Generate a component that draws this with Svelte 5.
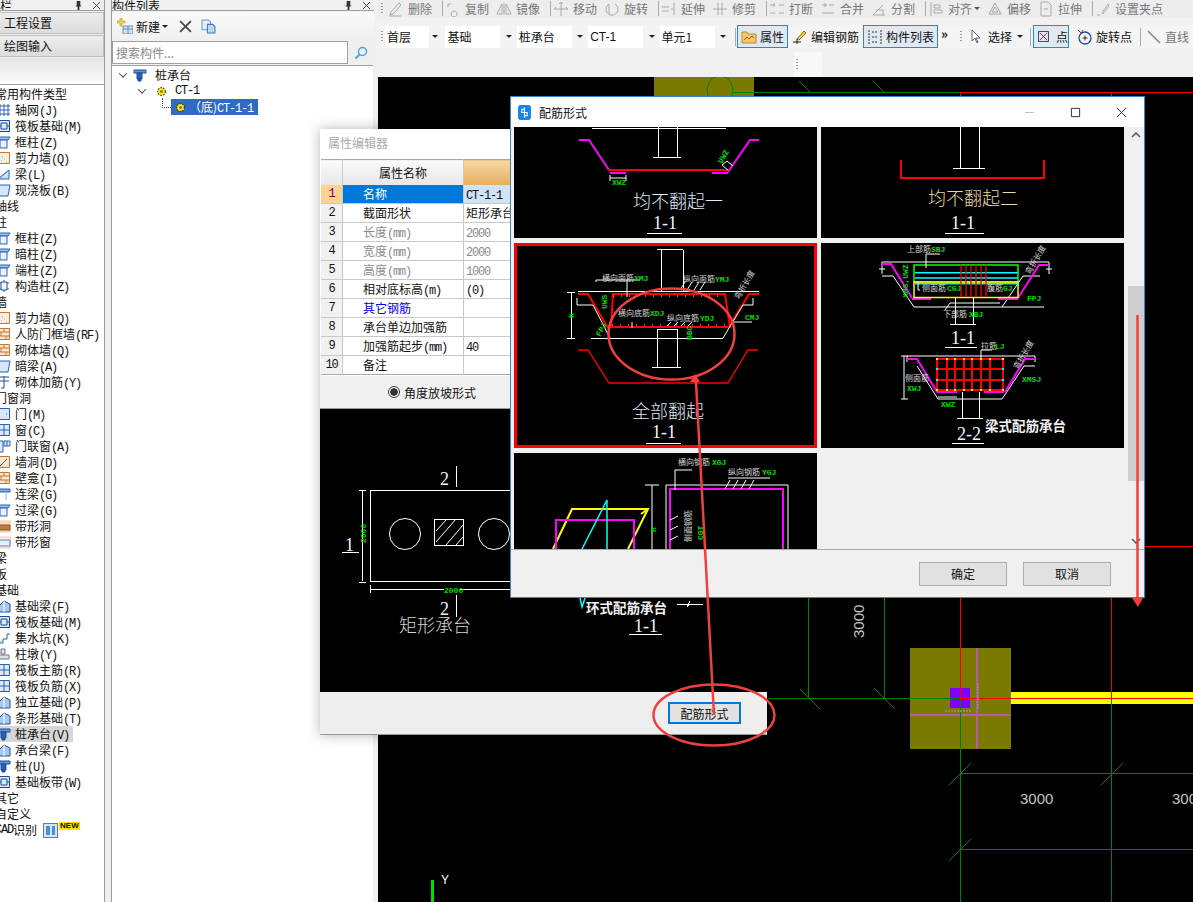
<script>
	// sidebar rows: text, shortcut key, icon kind. No icon = category heading
	const sideRows = [
		['常用构件类型'], ['轴网', 'J', 'grid'], ['筏板基础', 'M', 'raft'], ['框柱', 'Z', 'col'], ['剪力墙', 'Q', 'wall'], ['梁', 'L', 'beam'], ['现浇板', 'B', 'slab'],
		['轴线'], ['柱'], ['框柱', 'Z', 'col'], ['暗柱', 'Z', 'col'], ['端柱', 'Z', 'col'], ['构造柱', 'Z', 'gear'],
		['墙'], ['剪力墙', 'Q', 'wall'], ['人防门框墙', 'RF', 'brick'], ['砌体墙', 'Q', 'brick'], ['暗梁', 'A', 'slab'], ['砌体加筋', 'Y', 'rebar'],
		['门窗洞'], ['门', 'M', 'door'], ['窗', 'C', 'win'], ['门联窗', 'A', 'doorwin'], ['墙洞', 'D', 'hole'], ['壁龛', 'I', 'brick'], ['连梁', 'G', 'lintel'], ['过梁', 'G', 'col'], ['带形洞', '', 'band'], ['带形窗', '', 'bandwin'],
		['梁'], ['板'], ['基础'],
		['基础梁', 'F', 'found'], ['筏板基础', 'M', 'raft'], ['集水坑', 'K', 'pit'], ['柱墩', 'Y', 'pier'], ['筏板主筋', 'R', 'win'], ['筏板负筋', 'X', 'win'], ['独立基础', 'P', 'found'], ['条形基础', 'T', 'found'], ['桩承台', 'V', 'cap'], ['承台梁', 'F', 'found'], ['桩', 'U', 'cap'], ['基础板带', 'W', 'raft'],
		['其它'], ['自定义']
	];

	// each icon is a list of [path, stroke, fill]
	const icons = {
		grid: [['M1 3h12M1 7h12M1 11h12M3 1v12M7 1v12M11 1v12', '#2a62b0', 'none']],
		raft: [['M1.500 1.500h11v11h-11z', '#1f4f9c', '#dbe7f6'], ['M4 4h6v6h-6zM1 7h3M10 7h3', '#1f4f9c', 'none']],
		col: [['M1 2h12l-2 3h-10z', '#2a62b0', '#9cc0ea'], ['M3 5h7v8h-7z', '#2a62b0', '#e9f1fb']],
		wall: [['M1.500 1.500h11v11h-11z', '#c9772f', '#f4efe6'], ['M4 10h.500M7 8h.500M9 11h.500M5 6h.500', '#777', 'none']],
		beam: [['M1 12l11-9v9z', '#2a62b0', '#cfe0f5'], ['M3 11l8-7', '#4f8fd8', 'none']],
		slab: [['M1 2h12l-2 11h-9z', '#2a62b0', '#d6e5f7']],
		gear: [['M7 1v12M2 4h10M2 10h10', '#2a62b0', 'none'], ['M4 3h6v8h-6z', '#1f4f9c', '#f3f6fb']],
		brick: [['M1.500 1.500h11v11h-11z', '#c9772f', '#f7e6d3'], ['M1 5h12M1 9h12M7 1v4M4 5v4M9 9v4', '#c9772f', 'none']],
		rebar: [['M1 2h11M1 6h11M7 1v12M4 13h3', '#1f4f9c', 'none']],
		door: [['M1.500 1.500h11v11h-11z', '#2a62b0', '#dbe7f6'], ['M9 7h1', '#1f4f9c', 'none']],
		win: [['M1.500 1.500h11v11h-11z', '#2a62b0', '#dbe7f6'], ['M7 1v12M1 7h12', '#2a62b0', 'none']],
		doorwin: [['M1 2h5v11h-5zM7 2h6v5h-6z', '#2a62b0', '#dbe7f6'], ['M10 2v5', '#2a62b0', 'none']],
		hole: [['M1.500 1.500h11v11h-11z', '#c9772f', '#f7e6d3'], ['M3 11l7-7', '#555', 'none']],
		lintel: [['M1 2h12v3h-12z', '#2a62b0', '#7ea9de'], ['M9 5v8', '#8db4e2', 'none']],
		band: [['M0 2h14v11h-14z', '#f2c9a8', '#f7dcc4'], ['M0 6h13v5h-13z', '#8a5a2c', '#b77c45']],
		bandwin: [['M0 2h14v11h-14z', '#f2c9a8', '#f9ece2'], ['M0 5h13v6h-13z', '#5c86c4', '#e4edf9']],
		found: [['M1 13v-5l6-6 6 3v8z', '#1f4f9c', '#a9c7ec'], ['M7 2v11', '#fff', 'none']],
		pit: [['M1 12h5v-4h4v-5h3', '#2a62b0', 'none'], ['M2 12l4-3', '#8db4e2', 'none']],
		pier: [['M4 2h4v5h-4zM1 8h11v4h-11z', '#777', '#d9e3ef']],
		cap: [['M1 2h12v3h-12z', '#1f4f9c', '#5f93d6'], ['M4 5h5v6h-5zM5 11h3v2h-3z', '#1f4f9c', '#2a62b0']]
	};

	// 0 is a separator
	const tools = [
		['删除', 'M2 14l3-1 8-9-2-2-8 9zM1 15h12'], 0,
		['复制', 'M3 3h3M3 3v3M9 10a3 3 0 1 0 .100 0'], ['镜像', 'M8 2v12M6 13h-5l5-10zM10 13h5l-5-10z'], 0,
		['移动', 'M8 1v14M1 8h14M8 1l-2 2M8 1l2 2M1 8l2-2M15 8l-2-2'], ['旋转', 'M5 3a6 6 0 1 0 6 0M5 3v10'], 0,
		['延伸', 'M1 6h7M1 10h7M13 2v12M10 8h2'], ['修剪', 'M1 8h14M6 2v12M10 2v12'], 0,
		['打断', 'M1 4h5M10 4h5M1 12h5M10 12h5M5 2v4'], ['合并', 'M2 4h5M9 4h5M2 12h12M5 2v4'], ['分割', 'M2 14h12M2 14l10-10M5 9h7v5'], 0,
		['对齐', 'M3 1v14M6 4h6v3h-6zM6 9h8v3h-8z', true], ['偏移', 'M8 2l6 11h-12zM8 6l3 5h-6z'], ['拉伸', 'M3 1h7l3 3v11h-10zM6 8h4'], 0,
		['设置夹点', 'M2 14h3M7 12l6-9 1 2-6 8z']
	];

	const props = [
		['名称', '', 'CT-1-1'],
		['截面形状', '', '矩形承台'],
		['长度', '(mm)', '2000', true],
		['宽度', '(mm)', '2000', true],
		['高度', '(mm)', '1000', true],
		['相对底标高', '(m)', '(0)'],
		['其它钢筋', '', ''],
		['承台单边加强筋', '', ''],
		['加强筋起步', '(mm)', '40'],
		['备注', '', '']
	];

	// corner bars of the beam type section, drawn as dots on the red grid
	const gridX = [937, 947, 955, 964, 972, 981, 990, 1003];
</script>

{#snippet icon(kind)}
	<svg class="ico" viewBox="0 0 14 14">
		{#each icons[kind] as p}
			<path d={p[0]} stroke={p[1]} fill={p[2]} />
		{/each}
	</svg>
{/snippet}

{#snippet panelHead(title)}
	<div class="panel-head">
		<span class="panel-title">{title}</span>
		<svg class="pin" viewBox="0 0 10 10"><path d="M3 0h4v5h1v1h-2v4h-2v-4h-2v-1h1z" fill="#333" /></svg>
		<svg class="x" viewBox="0 0 10 10"><path d="M1 1l8 8M9 1l-8 8" stroke="#333" fill="none" /></svg>
	</div>
{/snippet}

{#snippet caret()}
	<i class="caret"></i>
{/snippet}

<div class="app">
	<aside class="side">
		{@render panelHead('栏')}
		<button class="side-btn">工程设置</button>
		<button class="side-btn">绘图输入</button>
		<div class="side-gap"></div>
		<div class="side-list">
			{#each sideRows as r}
				{#if r[2]}
					<div class="row item" class:on={r[0] === '桩承台'}>
						{@render icon(r[2])}<span>{r[0]}{#if r[1]}<span class="lat">({r[1]})</span>{/if}</span>
					</div>
				{:else}
					<div class="row cat">{r[0]}</div>
				{/if}
			{/each}
			<div class="row cat">
				<span class="lat">CAD</span>识别
				<span class="cad-ico"><i></i><i></i></span>
				<span class="new">NEW</span>
			</div>
		</div>
	</aside>

	<section class="list-panel">
		{@render panelHead('构件列表')}
		<div class="list-tools">
			<svg class="new-ico" viewBox="0 0 16 16">
				<path d="M3 0h2v3h3v2h-3v3h-2v-3h-3v-2h3z" fill="#f2d24a" stroke="#a88a1c" stroke-width=".5" />
				<path d="M6 8h10v8h-10z" fill="#cfe0f5" stroke="#6d8fb8" />
				<path d="M6 11h10M11 8v8" stroke="#6d8fb8" />
			</svg>
			<span>新建</span>{@render caret()}
			<svg class="del-ico" viewBox="0 0 12 12"><path d="M1 1l10 10M11 1l-10 10" stroke="#444" stroke-width="1.600" fill="none" /></svg>
			<svg class="copy-ico" viewBox="0 0 14 14"><path d="M1 1h6l2 2v7h-8z" fill="#e6eef8" stroke="#6d9ad0" /><path d="M6 5h5l2 2v6h-7z" fill="#bcd5f0" stroke="#3f7bbf" /></svg>
		</div>
		<div class="search">
			<div class="search-input">搜索构件...</div>
			<div class="search-btn">
				<svg viewBox="0 0 14 14"><circle cx="8.500" cy="5.500" r="4" fill="#e8f4fd" stroke="#4aa3e0" stroke-width="1.500" /><path d="M5.500 8.500l-4 4" stroke="#4aa3e0" stroke-width="2" /></svg>
			</div>
		</div>
		<div class="tree">
			<div class="node n0">
				<i class="chev"></i>
				<span class="cap-ico">{@render icon('cap')}</span>
				<span>桩承台</span>
			</div>
			<div class="node n1">
				<i class="chev"></i>
				<svg class="gear" viewBox="0 0 10 10"><circle cx="5" cy="5" r="3.500" fill="#ffe800" stroke="#444" stroke-dasharray="1.500 1" /><circle cx="5" cy="5" r="1.200" fill="#666" /></svg>
				<span class="lat">CT-1</span>
			</div>
			<div class="node n2">
				<i class="elbow"></i>
				<div class="picked">
					<svg class="gear" viewBox="0 0 10 10"><circle cx="5" cy="5" r="3.500" fill="#ffe800" stroke="#333" stroke-dasharray="1.500 1" /><circle cx="5" cy="5" r="1.200" fill="#666" /></svg>
					<span class="picked-t">（底)<span class="lat">CT-1-1</span></span>
				</div>
			</div>
		</div>
	</section>

	<main class="main">
		<div class="toolbar">
			<div class="tools-1">
				<i class="grip"></i>
				{#each tools as t}
					{#if t === 0}
						<i class="tsep"></i>
					{:else}
						<div class="tool" class:drop={t[2]}>
							<svg viewBox="0 0 16 16"><path d={t[1]} /></svg>
							<span>{t[0]}</span>{#if t[2]}{@render caret()}{/if}
						</div>
					{/if}
				{/each}
			</div>
			<div class="tools-2">
				<i class="grip"></i>
				<div class="combo c1"><span>首层</span>{@render caret()}</div>
				<div class="combo"><span>基础</span>{@render caret()}</div>
				<div class="combo"><span>桩承台</span>{@render caret()}</div>
				<div class="combo"><span class="lat">CT-1</span>{@render caret()}</div>
				<div class="combo"><span>单元1</span>{@render caret()}</div>
				<i class="vsep"></i>
				<div class="tbtn active">
					<svg viewBox="0 0 16 16"><path d="M1 3h5l1 2h8v9h-14z" fill="#f3c76b" stroke="#b98a2e" /><path d="M3 11l3-3 2 2 3-3 2 2" stroke="#a3571e" fill="none" /></svg>
					<span>属性</span>
				</div>
				<div class="tbtn">
					<svg viewBox="0 0 16 16"><path d="M5 10l7-8 2 2-7 7z" fill="#f2d24a" stroke="#8a6a10" /><path d="M1 13h8M5 10v5" stroke="#222" fill="none" /></svg>
					<span>编辑钢筋</span>
				</div>
				<div class="tbtn active">
					<svg viewBox="0 0 16 16"><path d="M2 1v14M14 1v14M5 3h6M5 8h6M5 13h6" stroke="#333" stroke-dasharray="2 1" fill="none" /></svg>
					<span>构件列表</span>
				</div>
				<span class="more">»</span>
				<i class="grip"></i>
				<div class="tbtn pick">
					<svg viewBox="0 0 16 16"><path d="M5 1v11l3-3 2 5 1-1-2-4h4z" fill="#fff" stroke="#667" /></svg>
					<span>选择</span>{@render caret()}
				</div>
				<i class="vsep v2"></i>
				<div class="tbtn active dot">
					<svg viewBox="0 0 12 12"><path d="M.500.500h11v11h-11z" fill="#dce8f7" stroke="#333" /><path d="M2 2l8 8M10 2l-8 8" stroke="#a11" fill="none" /></svg>
					<span>点</span>
				</div>
				<div class="tbtn spin">
					<svg viewBox="0 0 16 16"><circle cx="8" cy="9" r="6" fill="none" stroke="#1f4f9c" stroke-width="1.300" /><path d="M8 6.500v5M5.500 9h5" stroke="#333" /><path d="M1 1l3 3 2-3" stroke="#c22" fill="none" /></svg>
					<span>旋转点</span>
				</div>
				<i class="vsep"></i>
				<div class="tbtn off">
					<svg viewBox="0 0 16 16"><path d="M2 2l12 12" stroke="#888" stroke-width="1.500" /></svg>
					<span>直线</span>
				</div>
			</div>
			<div class="tools-3"><div class="float-tab"><i class="grip"></i></div></div>
		</div>

		<svg class="canvas" viewBox="378 77 815 825" shape-rendering="crispEdges">
			<rect x="654" y="77" width="100" height="20" fill="#7a7a00" />
			<path class="cg" d="M732 92H960M799 81l12 12M873 81l12 12" />
			<ellipse class="cg" cx="720" cy="90" rx="13" ry="14" shape-rendering="auto" />
			<path class="cr" d="M960 92H1193M960 92V698M1111 92V698" />
			<path class="cr" d="M1145 546H1193" />

			<path class="cg" d="M768 698H960M808 598V698M884 598V698M800 689l20 20M874 688l21 21" />
			<rect x="910" y="648" width="101" height="101" fill="#7a7a00" />
			<rect x="1011" y="692" width="182" height="12" fill="#ffff00" />
			<path class="cp" d="M977 648V749M910 715H1011" />
			<rect x="950" y="688" width="20" height="20" fill="#7f00ff" />
			<path class="cg" d="M910 698H960M960 698V902M1111 698V902M960 773H1193M960 849H1193" />
			<path class="cg" d="M949 785l22-22M1101 785l22-22M949 861l22-22" />
			<path class="cr" d="M960 598V698M1111 598V698M960 698H1193" />
			<path d="M945 711h26M978 683v26" stroke="#8a8a70" stroke-width="2" stroke-dasharray="2 1" fill="none" />

			<text class="dim" x="1020" y="804">3000</text>
			<text class="dim" x="1172" y="804">3000</text>
			<text class="dim" transform="translate(864 638) rotate(-90)">3000</text>

			<path d="M432 902V880" stroke="#00e000" stroke-width="3" fill="none" />
			<path d="M427 882l5-11 5 11z" fill="#00e000" />
			<text class="axis" x="441" y="884">Y</text>
		</svg>
	</main>

	<!-- property window, sits under the form dialog -->
	<div class="prop-win">
		<div class="prop-title">属性编辑器</div>
		<table class="prop-table">
			<thead>
				<tr><th class="num"></th><th class="pname">属性名称</th><th class="pval"></th></tr>
			</thead>
			<tbody>
				{#each props as p, i}
					<tr class:sel={i === 0} class:dim-row={p[3]}>
						<td class="num">{i + 1}</td>
						<td class="pname" class:link={i === 6}>{p[0]}<span class="lat">{p[1]}</span></td>
						<td class="pval">{#if /[\u4e00-\u9fa5]/.test(p[2])}{p[2]}{:else}<span class="lat">{p[2]}</span>{/if}</td>
					</tr>
				{/each}
			</tbody>
		</table>
		<div class="radio-row"><i class="radio"></i><span>角度放坡形式</span></div>
		<svg class="preview" viewBox="320 408 447 283">
			<g shape-rendering="crispEdges">
				<path class="w" d="M370.500 489.500H680V580.500H370.500ZM456.500 465V486M456.500 594V616M362.500 489V580M359 489h7M359 581h7M370 588.500H444M460 588.500H640M370 584v8" />
				<rect class="w" x="434" y="518" width="29" height="26" />
				<path class="w" d="M436 530l11-12M436 541l20-23M446 544l17-20M456 544l7-8" shape-rendering="auto" />
				<path class="w" d="M342 551H359M629 633H662" />
				<path class="w" d="M677 603H703M690 600l-3 6 3-3" />
			</g>
			<circle class="w" cx="405" cy="533" r="15.500" />
			<circle class="w" cx="494" cy="533" r="15.500" />
			<text class="num-t" x="440" y="484">2</text>
			<text class="num-t" x="440" y="614">2</text>
			<text class="num-t" x="345" y="550">1</text>
			<text class="grn tiny" transform="translate(366 542) rotate(-90)">2000</text>
			<text class="grn tiny" x="444" y="592">2000</text>
			<text class="cad-cap" x="399" y="631">矩形承台</text>
			<text class="bold-cap" x="586" y="612">环式配筋承台</text>
			<text class="num-t" x="634" y="631">1-1</text>
			<path class="c" d="M580 597l2 9 3-9" />
		</svg>
		<div class="prop-foot"><button class="form-btn">配筋形式</button></div>
	</div>

	<!-- rebar form dialog -->
	<div class="dialog">
		<div class="dlg-title">
			<svg class="dlg-logo" viewBox="0 0 12 14"><rect width="12" height="14" rx="2.500" fill="#1087e8" /><path d="M6 2v10M6 4H3.500v3H6M6 7h2.500v3H6" stroke="#fff" fill="none" /></svg>
			<span>配筋形式</span>
			<svg class="win-b min" viewBox="0 0 12 12"><path d="M1 6h10" stroke="#bbb" /></svg>
			<svg class="win-b max" viewBox="0 0 12 12"><path d="M1.500 1.500h9v9h-9z" stroke="#222" fill="none" /></svg>
			<svg class="win-b cls" viewBox="0 0 12 12"><path d="M1 1l10 10M11 1l-10 10" stroke="#222" fill="none" /></svg>
		</div>
		<div class="dlg-body">
			<div class="thumbs">
				<div class="thumb">
					<svg viewBox="514 127 303 111">
						<g shape-rendering="crispEdges">
							<path class="w" d="M592 128.500H726M658.500 127V157M677.500 127V157M653 157.500H681M647 233.500H682" />
						</g>
						<path class="m2" d="M579 140H589L609 170M728 172L750 140H759M610 173H626M712 173H728" />
						<path class="r2" d="M609 170H728" />
						<path class="w" d="M610 175v6M626 175v6M610 178H626M728 170l-6-5 5-4 6 5" />
						<text class="grn tiny" x="612" y="185">XWZ</text>
						<text class="grn tiny" transform="translate(722 164) rotate(-60)">UWZ</text>
						<text class="cap" x="633" y="208">均不翻起一</text>
						<text class="num-t" x="653" y="229">1-1</text>
					</svg>
				</div>
				<div class="thumb">
					<svg viewBox="821 127 303 111">
						<g shape-rendering="crispEdges">
							<path class="w" d="M960.500 127V168M979.500 127V168M953 168.500H985M945 233.500H984" />
							<path class="r2" d="M901 160V178H1044V160" />
						</g>
						<text class="cap warm" x="928" y="205">均不翻起二</text>
						<text class="num-t" x="951" y="229">1-1</text>
					</svg>
				</div>
				<div class="thumb picked-thumb">
					<svg viewBox="517 246 297 199">
						<g shape-rendering="crispEdges">
							<path class="w" d="M661.500 250V291M683.500 250V291M657 249.500H683M578 291.500H759M591 338.500H723M657.500 329V367M677.500 329V367M652 367.500H681M646 443.500H681M571.500 292V338M567 292h8M567 338h8M657 329.500H677" />
						</g>
						<path class="r2" d="M613 294H725L730 327H611Z" />
						<path class="r2" d="M578 294H588L608 328M730 325L749 294H759" />
						<path class="r1" d="M578 350H588L609 383H728L748 350H758" />
						<path class="w" d="M577 305H593L610 338M723 338L743 305H753M577 298V305M753 298V305M596 282V280H640M627 280V297M680 290l5-8M687 290l5-8M694 290l5-8M700 290l5-8M632 328V322M667 326l4-4M674 326l4-4M681 326l4-4M688 326l4-4M734 322H752" />
						<path class="dots" d="M613 296H725M612 325H730" />
						<text class="lab" x="602" y="281">横向面筋</text><text class="grn tiny" x="634" y="281">XMJ</text>
						<text class="lab" x="683" y="282">纵向面筋</text><text class="grn tiny" x="715" y="282">YMJ</text>
						<text class="lab" x="618" y="316">横向底筋</text><text class="grn tiny" x="650" y="316">XDJ</text>
						<text class="lab" x="667" y="321">纵向底筋</text><text class="grn tiny" x="700" y="321">YDJ</text>
						<text class="grn tiny" x="745" y="320">CMJ</text>
						<text class="grn tiny" transform="translate(600 337) rotate(-60)">FPJ</text>
						<text class="grn tiny" transform="translate(607 309) rotate(-90)">UWS</text>
						<text class="grn tiny" transform="translate(692 340) rotate(-90)">BBC</text>
						<text class="grn tiny" transform="translate(574 318) rotate(-90)">h</text>
						<text class="lab" transform="translate(739 300) rotate(-60)">弯折长度</text>
						<text class="cap" x="632" y="418">全部翻起</text>
						<text class="num-t" x="652" y="438">1-1</text>
					</svg>
				</div>
				<div class="thumb">
					<svg viewBox="821 243 303 205">
						<path class="w" d="M882 262H1049M882 262v12M1049 262v12M879 269h6M1046 269h6M882 276H893L914 307H1044M1002 307L1023 276H1040" />
						<path class="m2" d="M882 264H891L912 298M1018 298L1039 265H1048M912 299H931M998 299H1018" />
						<rect x="914" y="265" width="104" height="17" fill="none" stroke="#00ff00" stroke-width="1.500" />
						<rect x="914" y="282" width="104" height="15.500" fill="none" stroke="#ffff00" stroke-width="1.500" />
						<path class="c1" d="M915 272.700H1018M915 278H1018M915 283.700H1018" />
						<path class="r1" d="M961 265V297M966 265V297M971 265V297M976 265V297M981 265V297M986 265V297" />
						<path class="w" d="M955.500 298V324M973.500 298V324M950 324.500H976M945 347.500H977M926 254H940M926 254V268M920 290H918V282M1000 303H950L945 310" />
						<text class="lab" x="907" y="252">上部筋</text><text class="grn tiny" x="931" y="252">SBJ</text>
						<text class="lab" x="922" y="291">侧面筋</text><text class="grn tiny" x="947" y="291">CGJ</text>
						<text class="lab" x="987" y="291">腹筋</text><text class="grn tiny" x="1003" y="291">GJ</text>
						<text class="grn tiny" x="1027" y="301">FPJ</text>
						<text class="lab" x="943" y="317">下部筋</text><text class="grn tiny" x="969" y="317">XBJ</text>
						<text class="grn tiny" transform="translate(908 298) rotate(-90)">XMS,UWZ</text>
						<text class="lab" transform="translate(1030 275) rotate(-60)">弯折长度</text>
						<text class="num-t" x="951" y="344">1-1</text>

						<path class="w" d="M907 356H1035M907 356v6M1035 356v6M901 356H908M901 399H908M904 356V399M917 366L938 399H1002L1024 366H1035M962.500 392V418M979.500 392V418M957 418.500H983M952 443.500H984M981 350V381M981 350H992M938 397H957" />
						<path class="m2" d="M907 359H917L937 392M1005 392L1025 359H1035M937 392H957M984 392H1004" />
						<path class="r2" d="M937 359H1003V390H937ZM947 359V390M955 359V390M964 359V390M972 359V390M981 359V390M990 359V390M937 369H1003M937 380H1003" />
						{#each gridX as gx}
							<rect class="bar-y" x={gx - 1} y="358" width="2" height="2" />
							<rect class="bar-y" x={gx - 1} y="389" width="2" height="2" />
						{/each}
						<rect class="bar-c" x="936" y="368" width="2" height="2" />
						<rect class="bar-c" x="936" y="379" width="2" height="2" />
						<rect class="bar-c" x="1002" y="368" width="2" height="2" />
						<rect class="bar-c" x="1002" y="379" width="2" height="2" />
						<text class="lab" x="981" y="349">拉筋</text><text class="grn tiny" x="995" y="349">LJ</text>
						<text class="lab" x="905" y="381">侧面筋</text><text class="grn tiny" x="907" y="391">XWJ</text>
						<text class="grn tiny" x="1022" y="382">XMSJ</text>
						<text class="grn tiny" x="941" y="407">XWZ</text>
						<text class="lab" transform="translate(1018 370) rotate(-60)">弯折长度</text>
						<text class="num-t" x="957" y="440">2-2</text>
						<text class="bold-cap" x="985" y="431">梁式配筋承台</text>
					</svg>
				</div>
				<div class="thumb">
					<svg viewBox="514 453 303 96">
						<path class="y1" d="M553 549L572 509H648L628 549" />
						<path class="m2" d="M556 549V520H634V549M670 549V489H783V549" />
						<path class="c1" d="M582 549L607 500V549" />
						<path class="w" d="M666 549V485H788V549M652 485V549M645 485H659M675 490V470M675 470H692M725 489l5-9M733 489l5-9M741 489l5-9M749 489l5-9M728 478H770M670 520l8-4M670 530l8-4M670 540l8-4" />
						<path class="y1" d="M641 514L648 509" />
						<text class="lab" x="678" y="465">横向钢筋</text><text class="grn tiny" x="712" y="465">XGJ</text>
						<text class="lab" x="728" y="475">纵向钢筋</text><text class="grn tiny" x="762" y="475">YGJ</text>
						<text class="grn tiny" transform="translate(656 532) rotate(-90)">h</text>
						<text class="lab" transform="translate(691 542) rotate(-90)">侧面钢筋</text>
						<text class="grn tiny" transform="translate(703 540) rotate(-90)">CGT</text>
					</svg>
				</div>
			</div>
			<div class="scrollbar">
				<svg class="sb-arrow" viewBox="0 0 10 6"><path d="M1 5l4-4 4 4" stroke="#555" stroke-width="1.500" fill="none" /></svg>
				<div class="sb-track"><div class="sb-thumb"></div></div>
				<svg class="sb-arrow" viewBox="0 0 10 6"><path d="M1 1l4 4 4-4" stroke="#555" stroke-width="1.500" fill="none" /></svg>
			</div>
		</div>
		<div class="dlg-foot">
			<button class="dlg-btn">确定</button>
			<button class="dlg-btn">取消</button>
		</div>
	</div>

	<!-- hand drawn red marks from the screenshot author -->
	<svg class="marks" viewBox="0 0 1193 902">
		<ellipse cx="671.500" cy="334" rx="63" ry="45.500" />
		<ellipse cx="714" cy="715" rx="60.500" ry="30.500" />
		<path d="M714 715L696 382" />
		<path class="fill" d="M690 382l5-8 5 8z" />
		<path d="M1137.500 315V598" />
		<path class="fill" d="M1132 598h11l-5 9z" />
	</svg>
</div>

<style>
	:global(body) {
		background: #f0f0f0;
	}

	.app {
		position: relative;
		display: flex;
		width: 1193px;
		height: 902px;
		overflow: hidden;
		font-family: 'Noto Sans CJK SC', sans-serif;
		font-size: 12px;
		color: #111;
	}

	i {
		display: block;
		font-style: normal;
	}

	/* latin text of the old bitmap font is half the width of a han glyph */
	.lat {
		font-family: 'Liberation Mono', monospace;
		font-size: 12px;
		letter-spacing: -1.2px;
		line-height: 1;
	}

	.caret {
		width: 0;
		height: 0;
		border-left: 3px solid transparent;
		border-right: 3px solid transparent;
		border-top: 3px solid #222;
	}

	.panel-head {
		display: flex;
		align-items: center;
		height: 10px;
		margin-bottom: 1px;
		border-bottom: 1px solid #a0a0a0;
		overflow: hidden;
		line-height: 7px;
		flex: none;
	}

	.panel-title {
		flex: 1;
		white-space: nowrap;
	}

	.pin,
	.x {
		width: 9px;
		height: 9px;
		flex: none;
	}

	.pin {
		margin-right: 9px;
	}

	.x {
		margin-right: 3px;
	}

	/* left navigation */
	.side {
		width: 104px;
		flex: none;
		display: flex;
		flex-direction: column;
		border-right: 1px solid #9a9a9a;
		background: #f0f0f0;
	}

	.side-btn {
		height: 22px;
		flex: none;
		margin: 0 0 1px;
		padding: 0 0 0 4px;
		border: 1px solid #bdbdbd;
		border-left: 0;
		background: linear-gradient(#ededed, #dcdcdc);
		font: inherit;
		text-align: left;
		line-height: 20px;
		color: #111;
	}

	.side-gap {
		height: 26px;
		flex: none;
		background: linear-gradient(#e4e4e4, #fbfbfb);
	}

	.side-list {
		flex: 1;
		background: #fff;
		border-top: 1px solid #a0a0a0;
		padding-top: 1px;
	}

	.row {
		height: 16px;
		line-height: 16px;
		white-space: nowrap;
	}

	.cat {
		margin-left: -5px;
		display: flex;
		align-items: center;
	}

	.item {
		display: flex;
		align-items: center;
		gap: 4px;
		margin-left: -3px;
		width: 76px;
	}

	.item.on {
		background: #d6d6d6;
	}

	.ico {
		width: 14px;
		height: 14px;
		flex: none;
	}

	.cad-ico {
		display: flex;
		gap: 2px;
		margin-left: 6px;
		width: 15px;
		height: 15px;
		padding: 2px;
		box-sizing: border-box;
		background: #d7e6f7;
		border: 1px solid #6b7a8c;
	}

	.cad-ico i {
		flex: 1;
		background: #4a90d9;
	}

	.new {
		align-self: flex-start;
		height: 8px;
		margin-left: 1px;
		padding: 0 1px;
		background: #ffe100;
		font: bold 8px/8px 'Liberation Sans', sans-serif;
	}

	/* component list */
	.list-panel {
		width: 263px;
		margin-left: 6px;
		flex: none;
		display: flex;
		flex-direction: column;
		border-left: 1px solid #9a9a9a;
		box-sizing: border-box;
		background: #f0f0f0;
	}

	.list-tools {
		display: flex;
		align-items: center;
		height: 28px;
		flex: none;
		padding-left: 5px;
		background: linear-gradient(#fafafa, #efefef);
	}

	.new-ico {
		width: 16px;
		height: 16px;
		margin-right: 3px;
	}

	.list-tools .caret {
		margin-left: 2px;
	}

	.del-ico {
		width: 13px;
		height: 13px;
		margin-left: 11px;
	}

	.copy-ico {
		width: 15px;
		height: 15px;
		margin-left: 9px;
	}

	.search {
		display: flex;
		height: 25px;
		flex: none;
		box-sizing: border-box;
		padding: 1px 0;
	}

	.search-input {
		width: 236px;
		box-sizing: border-box;
		border: 1px solid #a0a0a0;
		background: #fff;
		color: #888;
		padding-left: 3px;
		line-height: 21px;
		font-size: 12px;
	}

	.search-btn {
		flex: 1;
		display: flex;
		align-items: center;
		justify-content: center;
		background: #efefef;
	}

	.search-btn svg {
		width: 14px;
		height: 14px;
	}

	.tree {
		flex: 1;
		margin-right: 1px;
		background: #fff;
		border-top: 1px solid #a0a0a0;
		padding-top: 1px;
	}

	.node {
		display: flex;
		align-items: center;
		height: 16px;
		line-height: 16px;
		white-space: nowrap;
	}

	.n0 {
		padding-left: 8px;
	}

	.n1 {
		padding-left: 27px;
	}

	.n2 {
		padding-left: 50px;
	}

	.chev {
		width: 5px;
		height: 5px;
		border-right: 1.500px solid #444;
		border-bottom: 1.500px solid #444;
		transform: rotate(45deg) translate(-1px, -1px);
	}

	.cap-ico {
		display: flex;
		margin: 0 8px 0 7px;
	}

	.n1 .chev {
		margin-right: 11px;
	}

	.gear {
		width: 11px;
		height: 11px;
		flex: none;
	}

	.n1 .lat {
		margin-left: 8px;
	}

	.elbow {
		width: 8px;
		height: 9px;
		margin-top: -8px;
		border-left: 1px dotted #555;
		border-bottom: 1px dotted #555;
	}

	.picked {
		display: flex;
		align-items: center;
		width: 87px;
		height: 16px;
		padding-left: 4px;
		box-sizing: border-box;
		background: #2f6bc4;
		color: #fff;
	}

	.picked-t {
		margin-left: 3px;
	}

	/* cad area */
	.main {
		flex: 1;
		min-width: 0;
		margin-left: 4px;
		display: flex;
		flex-direction: column;
	}

	.toolbar {
		height: 77px;
		flex: none;
		background: #f1f1f1;
	}

	.grip {
		width: 2px;
		height: 12px;
		flex: none;
		background-image: linear-gradient(#999 50%, transparent 50%);
		background-size: 2px 3px;
	}

	.tools-1 {
		display: flex;
		align-items: center;
		height: 17px;
		padding-left: 3px;
		background: #ededed;
		color: #777;
		overflow: hidden;
	}

	.tools-1 > .grip {
		margin-right: 5px;
	}

	.tool {
		display: flex;
		align-items: center;
		gap: 4px;
		width: 51px;
		flex: none;
	}

	.tool span {
		white-space: nowrap;
	}

	.tool.drop {
		width: 59px;
	}

	.tool .caret {
		border-top-color: #555;
		margin-left: -2px;
	}

	.tool svg {
		width: 16px;
		height: 16px;
		flex: none;
		fill: none;
		stroke: #a9a9a9;
	}

	.tsep {
		width: 6px;
		height: 15px;
		flex: none;
		background: linear-gradient(#aaa, #aaa) center / 1px 100% no-repeat;
	}

	.tools-2 {
		display: flex;
		align-items: center;
		height: 23px;
		margin-top: 8px;
		padding-left: 3px;
		background: #f4f4f4;
		overflow: hidden;
		white-space: nowrap;
	}

	.combo {
		display: flex;
		align-items: center;
		justify-content: space-between;
		width: 71px;
		height: 22px;
		padding: 0 4px 0 2px;
		box-sizing: border-box;
		margin-right: 1px;
		background: linear-gradient(to right, #fff 78%, #f3f3f3 78%);
	}

	.combo.c1 {
		width: 58px;
		margin-left: 2px;
		margin-right: 3px;
	}

	.combo .lat {
		font-family: 'Liberation Sans', sans-serif;
		letter-spacing: 0;
	}

	.vsep {
		width: 1px;
		height: 18px;
		flex: none;
		margin: 0 1px 0 4px;
		background: #aaa;
	}

	.vsep.v2 {
		margin: 0 2px 0 3px;
	}

	.tbtn {
		display: flex;
		align-items: center;
		gap: 3px;
		height: 23px;
		padding: 0 3px;
		box-sizing: border-box;
		border: 1px solid transparent;
		flex: none;
	}

	.tbtn svg {
		width: 16px;
		height: 16px;
		flex: none;
	}

	.tbtn.active {
		border-color: #2f84cc;
		background: #dfe9f3;
	}

	.tbtn.dot {
		width: 36px;
		gap: 7px;
		padding-left: 4px;
	}

	.tbtn.dot svg {
		width: 11px;
		height: 11px;
	}

	.tbtn.spin {
		margin-left: 4px;
	}

	.tbtn.off {
		color: #777;
	}

	.pick {
		padding-left: 4px;
		gap: 5px;
	}

	.more {
		width: 22px;
		margin-top: -7px;
		padding-left: 3px;
		box-sizing: border-box;
		font-size: 13px;
		font-weight: bold;
		flex: none;
	}

	.tools-3 {
		display: flex;
		height: 29px;
		padding-left: 415px;
		padding-top: 4px;
		box-sizing: border-box;
	}

	.float-tab {
		display: flex;
		align-items: center;
		width: 29px;
		height: 25px;
		padding-left: 3px;
		box-sizing: border-box;
		background: #f8f8f8;
	}

	.canvas {
		flex: 1;
		display: block;
		width: 815px;
		height: 825px;
		background: #000;
	}

	.canvas path,
	.canvas ellipse {
		fill: none;
	}

	.cg {
		stroke: #008000;
	}

	.cr {
		stroke: #ff0000;
	}

	.cp {
		stroke: #b45fa5;
		stroke-width: 2;
	}

	.dim {
		fill: #c4c4c4;
		font: 15px 'Liberation Sans', sans-serif;
	}

	.axis {
		fill: #fff;
		font: 12px 'Liberation Sans', sans-serif;
	}

	/* property window */
	.prop-win {
		position: absolute;
		left: 320px;
		top: 129px;
		width: 447px;
		height: 606px;
		display: flex;
		flex-direction: column;
		background: #fff;
		box-shadow: 0 0 12px rgba(0, 0, 0, 0.3);
	}

	.prop-title {
		height: 30px;
		padding-left: 8px;
		line-height: 28px;
		color: #aaa;
		flex: none;
	}

	.prop-table {
		width: 100%;
		flex: none;
		table-layout: fixed;
		border-collapse: collapse;
		border-top: 1px solid #a8a8a8;
		border-bottom: 1px solid #a8a8a8;
		margin-left: 1px;
	}

	.prop-table th {
		height: 25px;
		padding: 0;
		font-weight: normal;
		background: linear-gradient(#fbfbfb, #e6e6e6);
		border-right: 1px solid #c8c8c8;
	}

	.prop-table th.pval {
		background: linear-gradient(#f6d9a5, #e6ad5c);
	}

	.prop-table td {
		height: 18px;
		padding: 0;
		border-right: 1px solid #c8c8c8;
		border-bottom: 1px solid #c8c8c8;
		line-height: 18px;
		white-space: nowrap;
		overflow: hidden;
	}

	.prop-table tr:last-child td {
		border-bottom: 0;
	}

	.num {
		width: 21px;
		text-align: center;
		background: #f1f1f1;
	}

	td.num {
		font-family: 'Liberation Mono', monospace;
		letter-spacing: -1.2px;
		line-height: 18px;
	}

	.pname {
		width: 120px;
	}

	td.pname {
		padding-left: 20px !important;
		box-sizing: border-box;
	}

	td.pval {
		padding-left: 2px !important;
	}

	.dim-row td {
		color: #8c8c8c;
	}

	.dim-row td.num {
		color: #111;
	}

	td.link {
		color: #0000e0;
	}

	.sel td.num {
		background: #fdd28e;
		color: #600060;
	}

	.sel td.pname {
		background: #0078d7;
		color: #fff;
	}

	.sel td.pval {
		background: #cfe3f5;
	}

	.radio-row {
		display: flex;
		align-items: center;
		height: 33px;
		margin-top: 1px;
		padding-left: 68px;
		gap: 4px;
		flex: none;
		background: #f0f0f0;
		border-bottom: 1px solid #999;
		box-sizing: border-box;
	}

	.radio {
		width: 12px;
		height: 12px;
		box-sizing: border-box;
		border: 1px solid #333;
		border-radius: 50%;
		background: radial-gradient(#333 0 3.500px, #fff 4px);
	}

	.preview {
		display: block;
		width: 447px;
		height: 283px;
		flex: none;
		background: #000;
	}

	.prop-foot {
		flex: 1;
		display: flex;
		align-items: center;
		justify-content: flex-end;
		padding-right: 26px;
		background: #eee;
		border-bottom: 1px solid #999;
	}

	.form-btn {
		width: 73px;
		height: 22px;
		padding: 0;
		border: 2px solid #0078d7;
		background: #e1e1e1;
		font: inherit;
		color: #111;
	}

	/* shared cad drawing strokes */
	.w,
	.m2,
	.r2,
	.r1,
	.c1,
	.y1,
	.c,
	.dots {
		fill: none;
	}

	.w {
		stroke: #fff;
	}

	.m2 {
		stroke: #ff00ff;
		stroke-width: 2;
	}

	.r2 {
		stroke: #ff0000;
		stroke-width: 2;
	}

	.r1 {
		stroke: #ff0000;
		stroke-width: 1.300;
	}

	.c1,
	.c {
		stroke: #00ffff;
		stroke-width: 1.500;
	}

	.y1 {
		stroke: #ffff00;
		stroke-width: 2;
	}

	.dots {
		stroke: #ffff00;
		stroke-dasharray: 1 7;
	}

	.bar-y {
		fill: #ffff00;
	}

	.bar-c {
		fill: #00ffff;
	}

	.num-t {
		fill: #eef4ff;
		font: 18px 'Liberation Serif', serif;
	}

	.cap,
	.cad-cap {
		fill: #dfe8f5;
		font: 18px 'Noto Sans CJK SC', sans-serif;
		font-weight: 300;
	}

	.cad-cap {
		fill: #d9d6cf;
	}

	.cap.warm {
		fill: #e6d9a8;
	}

	.bold-cap {
		fill: #f2f2f2;
		font: bold 13.500px 'Noto Sans CJK SC', sans-serif;
	}

	.lab {
		fill: #d8d8d8;
		font: 8px 'Noto Sans CJK SC', sans-serif;
	}

	.grn {
		fill: #00d800;
	}

	.tiny {
		font: bold 8px 'Liberation Mono', monospace;
	}

	/* dialog */
	.dialog {
		position: absolute;
		left: 510px;
		top: 96px;
		width: 635px;
		height: 502px;
		display: flex;
		flex-direction: column;
		box-sizing: border-box;
		border: 1px solid #3a84c6;
		background: #f0f0f0;
	}

	.dlg-title {
		display: flex;
		align-items: center;
		height: 30px;
		flex: none;
		padding-left: 7px;
		background: #fff;
	}

	.dlg-logo {
		width: 13px;
		height: 15px;
		margin-right: 8px;
	}

	.win-b {
		width: 11px;
		height: 11px;
		margin-left: 35px;
	}

	.win-b.min {
		margin-left: auto;
	}

	.win-b.cls {
		margin-right: 17px;
	}

	.dlg-body {
		display: flex;
		height: 422px;
		flex: none;
		border-bottom: 1px solid #aaa;
		overflow: hidden;
		padding-left: 3px;
	}

	.thumbs {
		display: grid;
		grid-template-columns: 303px 303px;
		grid-template-rows: 111px 205px 96px;
		gap: 5px 4px;
		width: 610px;
	}

	.thumb {
		background: #000;
		overflow: hidden;
	}

	.thumb svg {
		display: block;
		width: 100%;
		height: 100%;
	}

	.picked-thumb {
		border: 3px solid #ff0000;
		box-sizing: border-box;
	}

	.scrollbar {
		display: flex;
		flex-direction: column;
		align-items: center;
		width: 16px;
		margin-left: 4px;
		background: #f0f0f0;
	}

	.sb-arrow {
		width: 10px;
		height: 6px;
		margin: 5px 0;
		flex: none;
	}

	.sb-track {
		flex: 1;
		width: 100%;
		padding-top: 143px;
		box-sizing: border-box;
	}

	.sb-thumb {
		height: 195px;
		background: #cdcdcd;
	}

	.dlg-foot {
		flex: 1;
		display: flex;
		align-items: center;
		justify-content: flex-end;
		gap: 16px;
		padding-right: 33px;
	}

	.dlg-btn {
		width: 88px;
		height: 24px;
		padding: 0;
		border: 1px solid #adadad;
		background: #e1e1e1;
		font: inherit;
		color: #111;
	}

	/* annotations lie on top of everything */
	.marks {
		position: absolute;
		left: 0;
		top: 0;
		width: 1193px;
		height: 902px;
		pointer-events: none;
	}

	.marks ellipse,
	.marks path {
		fill: none;
		stroke: #ee4040;
		stroke-width: 2.500;
	}

	.marks path.fill {
		fill: #ee4040;
		stroke: none;
	}
</style>
